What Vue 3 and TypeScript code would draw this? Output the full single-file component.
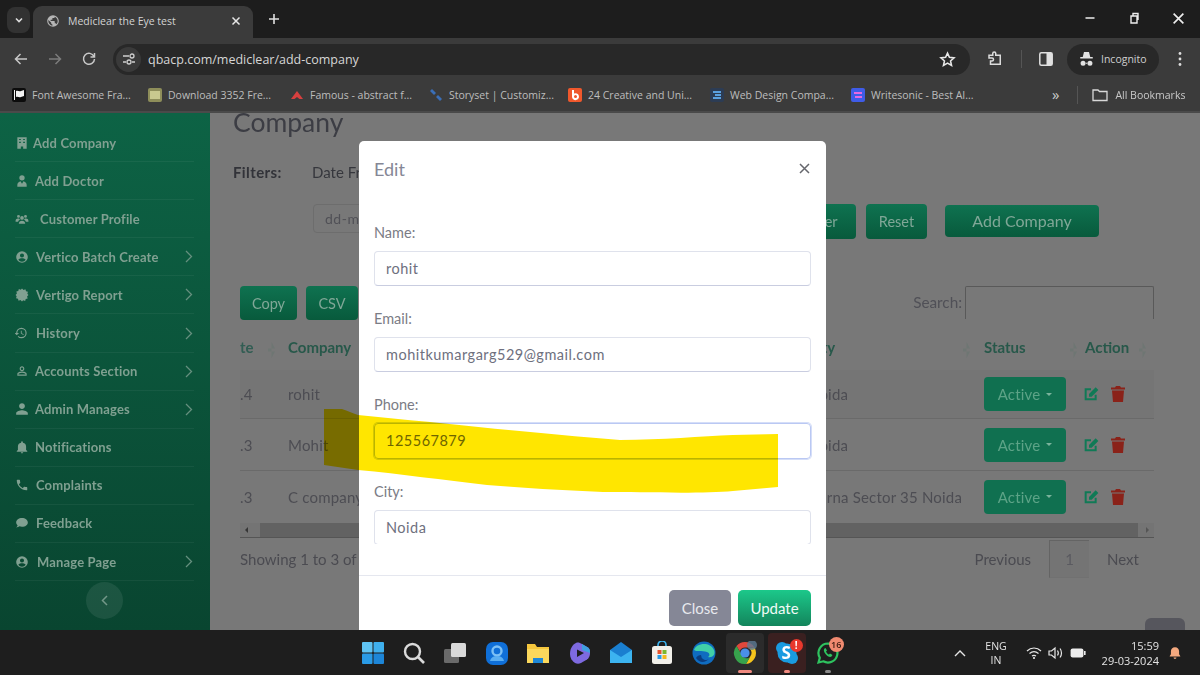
<script setup lang="ts">
interface NavItem {
  label: string
  icon: string
  gap: number
  more?: boolean
}

const ICONS: Record<string, string> = {
  building: 'M4 2h16v20h-6v-4h-4v4H4zM7 5v2h3V5zm7 0v2h3V5zM7 10v2h3v-2zm7 0v2h3v-2z',
  doctor: 'M12 2a4.6 4.6 0 0 1 4.6 4.6A4.6 4.6 0 0 1 12 11.2a4.6 4.6 0 0 1-4.6-4.6A4.6 4.6 0 0 1 12 2zM4 22v-3.500c0-3 3-5.500 5.500-6l2.500 4 2.500-4c2.500.5 5.500 3 5.500 6V22z',
  users: 'M6 5a2.500 2.500 0 1 1 0 5 2.500 2.500 0 0 1 0-5zm12 0a2.500 2.500 0 1 1 0 5 2.500 2.500 0 0 1 0-5zM12 7a3.200 3.200 0 1 1 0 6.400A3.200 3.200 0 0 1 12 7zM1 15c0-2.500 2-4 4-4h2c.6 1 1 1.600 1.800 2.300C7 14 5.800 15 5.400 16.500H1zm22 0c0-2.500-2-4-4-4h-2c-.6 1-1 1.600-1.800 2.300 1.800.7 3 1.700 3.400 3.200H23zM6.500 20c0-3 2.500-5 5.500-5s5.500 2 5.500 5z',
  circleUser: 'M12 2a10 10 0 1 0 0 20 10 10 0 0 0 0-20zm0 4a3.500 3.500 0 1 1 0 7 3.500 3.500 0 0 1 0-7zm0 14c-2.600 0-4.900-1.300-6.300-3.300C7 15 10 14.200 12 14.200s5 .8 6.300 2.500C16.900 18.700 14.600 20 12 20z',
  burst: 'M12 1l2.600 2.300 3.300-1 1 3.300 3.300 1-1 3.300L23 12l-2.300 2.600 1 3.300-3.300 1-1 3.300-3.300-1L12 23l-2.600-2.300-3.300 1-1-3.300-3.300-1 1-3.300L1 12l2.300-2.600-1-3.300 3.300-1 1-3.300 3.300 1z',
  history: 'M11 3a9 9 0 0 1 0 18 8.950 8.950 0 0 1-6.360-2.640l1.420-1.420A6.970 6.970 0 0 0 11 19a7 7 0 1 0-7-7h3l-4 4-4-4h3a9 9 0 0 1 9-9zm-1 5h1.500v4.250l3.500 2.080-.72 1.210L10 13z',
  userLine: 'M12 5.900a2.100 2.100 0 1 1 0 4.200 2.100 2.100 0 0 1 0-4.200m0 9c2.970 0 6.100 1.460 6.100 2.100v1.100H5.900V17c0-.64 3.130-2.100 6.100-2.100M12 4C9.790 4 8 5.790 8 8s1.790 4 4 4 4-1.790 4-4-1.790-4-4-4zm0 9c-2.670 0-8 1.340-8 4v3h16v-3c0-2.660-5.330-4-8-4z',
  user: 'M12 12c2.760 0 5-2.240 5-5s-2.240-5-5-5-5 2.240-5 5 2.240 5 5 5zm0 2c-3.340 0-10 1.670-10 5v3h20v-3c0-3.330-6.660-5-10-5z',
  bell: 'M12 23c1.100 0 2-.9 2-2h-4c0 1.100.9 2 2 2zm7-6v-6c0-3.070-1.630-5.640-5.500-6.320V3.500c0-.83-.67-1.500-1.500-1.500s-1.500.67-1.500 1.500v1.180C6.630 5.360 5 7.920 5 11v6l-2 2v1h18v-1z',
  phone: 'M6.620 10.790c1.440 2.830 3.760 5.140 6.590 6.590l2.200-2.200c.27-.27.67-.36 1.020-.24 1.120.37 2.330.57 3.570.57.55 0 1 .45 1 1V20c0 .55-.45 1-1 1-9.390 0-17-7.610-17-17 0-.55.45-1 1-1h3.500c.55 0 1 .45 1 1 0 1.250.2 2.450.57 3.570.11.35.03.74-.25 1.020z',
  comment: 'M12 3.500C6.500 3.500 2 6.800 2 11c0 1.900 1 3.600 2.500 4.900-.3 1.400-1.200 2.800-2.500 3.600 2.200 0 4-.8 5.400-1.900 1.400.5 3 .9 4.600.9 5.500 0 10-3.300 10-7.500s-4.500-7.500-10-7.500z',
}

const navItems: NavItem[] = [
  { label: 'Add Company', icon: 'building', gap: 18 },
  { label: 'Add Doctor', icon: 'doctor', gap: 20 },
  { label: 'Customer Profile', icon: 'users', gap: 25 },
  { label: 'Vertico Batch Create', icon: 'circleUser', gap: 21, more: true },
  { label: 'Vertigo Report', icon: 'burst', gap: 21, more: true },
  { label: 'History', icon: 'history', gap: 21, more: true },
  { label: 'Accounts Section', icon: 'userLine', gap: 20, more: true },
  { label: 'Admin Manages', icon: 'user', gap: 20, more: true },
  { label: 'Notifications', icon: 'bell', gap: 20 },
  { label: 'Complaints', icon: 'phone', gap: 21 },
  { label: 'Feedback', icon: 'comment', gap: 21 },
  { label: 'Manage Page', icon: 'circleUser', gap: 22, more: true },
]

const bookmarks = [
  { label: 'Font Awesome Fra...', back: '#0c0c0c', fill: '#f2f2f2', d: 'M2 2h1v10H2zM4 3c2-1 3 1 5 0l3-1v6l-3 1c-2 1-3-1-5 0z', width: 136 },
  { label: 'Download 3352 Fre...', back: '#8e8e5a', fill: '#c9c98f', d: 'M2 3h10v8H2z', width: 142 },
  { label: 'Famous - abstract f...', back: 'transparent', fill: '#d8403f', d: 'M7 3l6 8H9.500L7 9l-2.500 2H1z', width: 139 },
  { label: 'Storyset | Customiz...', back: 'transparent', fill: '#3a6fb8', d: 'M3 1l4 4-2 2-4-4zM9 7l4 4-2 2-4-4z', width: 139 },
  { label: '24 Creative and Uni...', back: '#f0582c', fill: '#fff', d: 'M4 2h2v3.500a3.500 3.500 0 1 1-2 3.200zM7.500 7a1.500 1.500 0 1 0 0 3 1.500 1.500 0 0 0 0-3z', width: 142 },
  { label: 'Web Design Compa...', back: '#2c3c54', fill: '#5aa0e0', d: 'M3 3h8v2H3zM5 6h6v2H5zM3 9h8v2H3z', width: 141 },
  { label: 'Writesonic - Best AI...', back: '#3f5ce8', fill: '#e66ae0', d: 'M3 4h8v2H3zM4 8h7v2H4z', width: 134 },
]

const rows = [
  { date: '.4', company: 'rohit', city: 'Noida' },
  { date: '.3', company: 'Mohit', city: 'Noida' },
  { date: '.3', company: 'C company', city: 'Corna Sector 35 Noida' },
]

const fields = [
  { label: 'Name:', value: 'rohit' },
  { label: 'Email:', value: 'mohitkumargarg529@gmail.com' },
  { label: 'Phone:', value: '125567879', focus: true },
  { label: 'City:', value: 'Noida' },
]
</script>

<template>
  <div class="screen">
    <!-- browser chrome -->
    <div class="tabbar">
      <button class="tab-search">
        <svg width="10" height="10" viewBox="0 0 10 10"><path d="M2 3.500l3 3 3-3" fill="none" stroke="#ddd" stroke-width="1.600" /></svg>
      </button>
      <div class="tab">
        <svg width="14" height="14" viewBox="0 0 24 24"><path fill="#b5b5b5" d="M12 2a10 10 0 1 0 0 20 10 10 0 0 0 0-20zM4 12c0-.6.1-1.200.2-1.800L9 15v1c0 1.100.9 2 2 2v2c-3.900-.5-7-3.900-7-8zm13.900 5.400c-.3-.8-1-1.400-1.900-1.400h-1v-3c0-.6-.4-1-1-1H8v-2h2c.6 0 1-.4 1-1V7h2c1.100 0 2-.9 2-2v-.4c2.900 1.200 5 4.100 5 7.400 0 2.100-.8 4-2.100 5.400z" /></svg>
        <span class="tab-title">Mediclear the Eye test</span>
        <svg class="tab-close" width="10" height="10" viewBox="0 0 10 10"><path d="M1.500 1.500l7 7m0-7l-7 7" stroke="#e6e6e6" stroke-width="1.500" /></svg>
      </div>
      <svg class="tab-plus" width="12" height="12" viewBox="0 0 12 12"><path d="M6 1v10M1 6h10" stroke="#e0e0e0" stroke-width="1.600" /></svg>
      <div class="win-controls">
        <svg width="12" height="12" viewBox="0 0 12 12"><path d="M1.500 6h9" stroke="#eee" stroke-width="1.500" /></svg>
        <svg width="12" height="12" viewBox="0 0 12 12"><path d="M3 4h6v7H3zM5 4V1.500h5V8" fill="none" stroke="#eee" stroke-width="1.400" /></svg>
        <svg width="13" height="13" viewBox="0 0 12 12"><path d="M1.500 1.500l9 9m0-9l-9 9" stroke="#eee" stroke-width="1.500" /></svg>
      </div>
    </div>

    <div class="toolbar">
      <div class="nav-btns">
        <svg width="16" height="16" viewBox="0 0 16 16"><path d="M14 8H3m4.500-5L2.500 8l5 5" fill="none" stroke="#c8c8c8" stroke-width="1.500" /></svg>
        <svg width="16" height="16" viewBox="0 0 16 16"><path d="M2 8h11M8.500 3l5 5-5 5" fill="none" stroke="#7c7c7c" stroke-width="1.500" /></svg>
        <svg width="16" height="16" viewBox="0 0 16 16"><path d="M13 5.500A5.500 5.500 0 1 0 13.500 8M13.500 2v4h-4" fill="none" stroke="#c8c8c8" stroke-width="1.500" /></svg>
      </div>
      <div class="address">
        <span class="tune">
          <svg width="14" height="14" viewBox="0 0 14 14"><path d="M1 4h6M1 10h3M10 10h3" stroke="#cfcfcf" stroke-width="1.400" fill="none" /><circle cx="10" cy="4" r="2" fill="none" stroke="#cfcfcf" stroke-width="1.300" /><circle cx="7" cy="10" r="2" fill="none" stroke="#cfcfcf" stroke-width="1.300" /></svg>
        </span>
        <span class="url">qbacp.com/mediclear/add-company</span>
        <svg class="star" width="17" height="17" viewBox="0 0 24 24"><path d="M12 3l2.700 6 6.500.7-4.900 4.300 1.400 6.500L12 17.200 6.300 20.500l1.400-6.500-4.900-4.300L9.300 9z" fill="none" stroke="#e8e8e8" stroke-width="2.200" /></svg>
      </div>
      <svg class="ext" width="18" height="18" viewBox="0 0 24 24"><path d="M4 7h5V4.500a2 2 0 0 1 4 0V7h6v12H6v-4.500h2a2 2 0 0 0 0-4H4z" fill="none" stroke="#dcdcdc" stroke-width="2" /></svg>
      <span class="tool-sep"></span>
      <svg class="panel" width="14" height="14" viewBox="0 0 14 14"><rect x=".8" y=".8" width="12.400" height="12.400" rx="1.500" fill="none" stroke="#e0e0e0" stroke-width="1.500" /><rect x="7.500" y="1" width="5.500" height="12" fill="#e0e0e0" /></svg>
      <div class="incognito">
        <svg width="15" height="17" viewBox="0 0 24 26"><path fill="#e2e2e2" d="M8 1h8l2 8h4v2.500H2V9h4zM6.500 15a4 4 0 1 1 0 8 4 4 0 0 1 0-8zm11 0a4 4 0 1 1 0 8 4 4 0 0 1 0-8zm-6.500 3h2v1.800h-2z" /></svg>
        <span>Incognito</span>
      </div>
      <svg class="kebab" width="4" height="16" viewBox="0 0 4 16"><circle cx="2" cy="2.500" r="1.400" fill="#ddd" /><circle cx="2" cy="8" r="1.400" fill="#ddd" /><circle cx="2" cy="13.500" r="1.400" fill="#ddd" /></svg>
    </div>

    <div class="bookmarks">
      <div v-for="b in bookmarks" :key="b.label" class="bookmark" :style="{ width: b.width + 'px' }">
        <svg width="14" height="14" viewBox="0 0 14 14"><rect width="14" height="14" rx="2" :fill="b.back" /><path :d="b.d" :fill="b.fill" /></svg>
        <span>{{ b.label }}</span>
      </div>
      <span class="bm-more">»</span>
      <span class="tool-sep short"></span>
      <svg width="16" height="14" viewBox="0 0 16 14"><path d="M1 2h5l1.500 1.500H15V12.500H1z" fill="none" stroke="#d8d8d8" stroke-width="1.300" /></svg>
      <span class="bm-all">All Bookmarks</span>
    </div>

    <!-- dimmed page -->
    <div class="page">
      <aside class="sidebar">
        <div v-for="item in navItems" :key="item.label" class="nav-item">
          <span class="nav-icon" :style="{ width: item.gap + 'px' }">
            <svg width="14" height="14" viewBox="0 0 24 24"><path :d="ICONS[item.icon]" fill="#80a091" fill-rule="evenodd" /></svg>
          </span>
          <span class="nav-label">{{ item.label }}</span>
          <svg v-if="item.more" width="8" height="13" viewBox="0 0 8 13"><path d="M1 1l5.500 5.500L1 12" fill="none" stroke="#658f7e" stroke-width="1.300" /></svg>
        </div>
        <div class="collapse">
          <svg width="7" height="11" viewBox="0 0 7 11"><path d="M6 1L1.500 5.500 6 10" fill="none" stroke="#739788" stroke-width="1.500" /></svg>
        </div>
      </aside>

      <main class="content">
        <h1 class="title">Company</h1>
        <div class="filter-labels">
          <strong>Filters:</strong>
          <span>Date From</span>
        </div>
        <div class="filter-row">
          <div class="date-input">dd-mm-yyyy</div>
          <div class="btn filter-btn">Filter</div>
          <div class="btn reset-btn">Reset</div>
          <div class="btn add-btn">Add Company</div>
        </div>

        <div class="dt-top">
          <div class="btn dt-btn copy">Copy</div>
          <div class="btn dt-btn csv">CSV</div>
          <label class="search-label">Search:</label>
          <div class="search-box"></div>
        </div>

        <div class="table">
          <div class="tr head">
            <div class="th">te<i class="sort"></i></div>
            <div class="th">Company</div>
            <div class="th">City<i class="sort last"></i></div>
            <div class="th">Status<i class="sort"></i></div>
            <div class="th">Action<i class="sort"></i></div>
          </div>
          <div v-for="(r, i) in rows" :key="i" class="tr body" :class="{ shade: i === 0 }">
            <div>{{ r.date }}</div>
            <div>{{ r.company }}</div>
            <div>{{ r.city }}</div>
            <div><span class="status">Active<i class="caret"></i></span></div>
            <div class="actions">
              <svg width="16" height="16" viewBox="0 0 24 24"><path d="M19 13v7H4V5h8" fill="none" stroke="#107a56" stroke-width="3" /><path d="M9 12L19 2l4 4-10 10H9z" fill="#107a56" /></svg>
              <svg width="14" height="16" viewBox="0 0 14 16"><path d="M5 0h4l1 1.500h4v2H0v-2h4zM1 4.500h12L12 16H2z" fill="#8a2219" /></svg>
            </div>
          </div>
        </div>

        <div class="scrollbar">
          <i class="arrow-l"></i>
          <div class="thumb"></div>
          <i class="arrow-r"></i>
        </div>

        <div class="dt-bottom">
          <span class="showing">Showing 1 to 3 of 3 entries</span>
          <span class="page-link">Previous</span>
          <span class="page-num">1</span>
          <span class="page-link next">Next</span>
        </div>
      </main>

      <div class="to-top"></div>

      <section class="modal">
        <header class="modal-head">
          <span>Edit</span>
          <svg width="11" height="11" viewBox="0 0 11 11"><path d="M1 1l9 9m0-9l-9 9" stroke="#66676d" stroke-width="1.500" /></svg>
        </header>
        <div class="modal-body">
          <div v-for="f in fields" :key="f.label" class="field">
            <label>{{ f.label }}</label>
            <div class="input" :class="{ focus: f.focus }">{{ f.value }}</div>
          </div>
        </div>
        <footer class="modal-foot">
          <div class="btn close">Close</div>
          <div class="btn update">Update</div>
        </footer>
      </section>

      <!-- marker scribble on top of the screenshot -->
      <svg class="scribble" width="480" height="110" viewBox="0 0 480 110">
        <path d="M2 3L20 3C26 5 30 7 36 9C130 18 220 28 298 34C340 34 380 30 411 29L456 28V81L411 85C380 88 320 86 281 86C240 84 200 82 165 79C120 74 80 68 36 64L2 59Z" fill="#ffe600" />
      </svg>
    </div>

    <!-- windows taskbar -->
    <footer class="taskbar">
      <div class="task-icons">
        <span class="task">
          <svg width="24" height="24" viewBox="0 0 24 24"><rect x="1" y="1" width="10.500" height="10.500" rx="1" fill="#5fc4f4" /><rect x="12.500" y="1" width="10.500" height="10.500" rx="1" fill="#3fb0ee" /><rect x="1" y="12.500" width="10.500" height="10.500" rx="1" fill="#2a9be6" /><rect x="12.500" y="12.500" width="10.500" height="10.500" rx="1" fill="#1d86d8" /></svg>
        </span>
        <span class="task">
          <svg width="24" height="24" viewBox="0 0 24 24"><circle cx="10.500" cy="10.500" r="7.500" fill="none" stroke="#dadada" stroke-width="2.400" /><path d="M16 16l6 6" stroke="#dadada" stroke-width="2.600" /></svg>
        </span>
        <span class="task">
          <svg width="24" height="24" viewBox="0 0 24 24"><rect x="1" y="8" width="15" height="14" rx="1.500" fill="#6a6a6a" /><rect x="8" y="2" width="15" height="14" rx="1.500" fill="#d9d9d9" /></svg>
        </span>
        <span class="task">
          <svg width="24" height="24" viewBox="0 0 24 24"><rect x="1" y="1" width="22" height="23" rx="7" fill="#0f6fd8" /><circle cx="12" cy="10" r="4.500" fill="none" stroke="#7cc0f5" stroke-width="2.400" /><path d="M5 20c1-4 4-5 7-5s6 1 7 5z" fill="#5aaef2" /></svg>
        </span>
        <span class="task">
          <svg width="24" height="24" viewBox="0 0 24 24"><path d="M1 3h8l2 3h12v16H1z" fill="#f5c63d" /><path d="M1 8h22v14H1z" fill="#fbd85c" /><path d="M7 17h10v5H7z" fill="#1e88d8" /></svg>
        </span>
        <span class="task">
          <svg width="24" height="24" viewBox="0 0 24 24"><path d="M8 2c2-1 4 0 6 1l6 3.500c2 1.500 2 3.500 2 5.500 0 3-1 5-3 6.500l-6 3.500c-2 1-4 1-6 0-3-2-5-5-5-9 0-5 2-9 6-11z" fill="#7e6ae0" /><path d="M14 3l6 3.500c2 1.500 2 3.500 2 5.500l-8-3z" fill="#3f9fe0" /><path d="M9 8.500l7 3.500-7 4z" fill="#1e1e1e" /></svg>
        </span>
        <span class="task">
          <svg width="24" height="24" viewBox="0 0 24 24"><path d="M1 9L12 1l11 8v13H1z" fill="#1a7fd0" /><path d="M1 9l11 7 11-7v13H1z" fill="#3cb4f0" /></svg>
        </span>
        <span class="task">
          <svg width="24" height="24" viewBox="0 0 24 24"><path d="M8 6V4a4 4 0 0 1 8 0v2" fill="none" stroke="#3cb4f0" stroke-width="1.600" /><rect x="2" y="5" width="20" height="18" rx="2.500" fill="#f2f0ea" /><rect x="7.500" y="9" width="4" height="4" fill="#e8542c" /><rect x="12.500" y="9" width="4" height="4" fill="#7cb82e" /><rect x="7.500" y="14" width="4" height="4" fill="#2a9be6" /><rect x="12.500" y="14" width="4" height="4" fill="#f5b81c" /></svg>
        </span>
        <span class="task">
          <svg width="24" height="24" viewBox="0 0 24 24"><circle cx="12" cy="12" r="11.500" fill="#0f6cc0" /><path d="M2 9C4 2 18 0 22 9c2 5-2 8-6 7 2-1 2-4-1-5-5-2-11 0-13-2z" fill="#41d0a8" /><path d="M9 14a5 5 0 0 0 8 4c-3 3-9 5-13-1 1-2 3-3 5-3z" fill="#0a3d80" /></svg>
        </span>
        <span class="task active">
          <svg width="24" height="24" viewBox="0 0 24 24"><path d="M12 1a11 11 0 0 1 9.500 5.500H12a5.500 5.500 0 0 0-5.200 3.700L3.500 5A11 11 0 0 1 12 1z" fill="#e0483c" /><path d="M21.500 6.500A11 11 0 0 1 13 23l4.500-8a5.500 5.500 0 0 0-1-7.500z" fill="#f5c51c" /><path d="M3.500 5A11 11 0 0 0 13 23l3.800-6.500a5.500 5.500 0 0 1-8-2.500z" fill="#37a24c" /><circle cx="12" cy="12" r="4.600" fill="#4a8fe8" /><circle cx="19" cy="4" r="5" fill="#5c7b94" fill-opacity=".8" /></svg>
          <i class="running wide"></i>
        </span>
        <span class="task active red">
          <svg width="24" height="24" viewBox="0 0 24 24"><circle cx="7" cy="7" r="6" fill="#1a9be0" /><circle cx="17" cy="17" r="6" fill="#1a9be0" /><circle cx="12" cy="12" r="9.500" fill="#1a9be0" /></svg>
          <b class="letter">S</b>
          <b class="badge">!</b>
          <i class="running"></i>
        </span>
        <span class="task">
          <svg width="24" height="24" viewBox="0 0 24 24"><path d="M12 2.500a9.500 9.500 0 0 0-8.200 14.300L2.500 21.500l4.800-1.200A9.500 9.500 0 1 0 12 2.500z" fill="none" stroke="#2ec35f" stroke-width="2.200" /><path d="M8.500 7.500c-1 1-1 3 1 5.500s4.500 3.500 6 2.500l1-1.500-2.500-1.500-1 1c-1 0-2.500-1.500-3-3l1-1L9.500 7z" fill="#2ec35f" /></svg>
          <b class="badge wa">16</b>
          <i class="running dim"></i>
        </span>
      </div>
      <div class="tray">
        <svg width="12" height="8" viewBox="0 0 12 8"><path d="M1 7l5-5 5 5" fill="none" stroke="#e6e6e6" stroke-width="1.400" /></svg>
        <div class="lang">ENG<br />IN</div>
        <svg class="wifi" width="16" height="14" viewBox="0 0 16 14"><path d="M1 5c4-4 10-4 14 0M3.500 7.500c3-2.500 6-2.500 9 0M6 10c1.500-1 2.500-1 4 0" fill="none" stroke="#e8e8e8" stroke-width="1.200" /><circle cx="8" cy="12" r="1.100" fill="#e8e8e8" /></svg>
        <svg width="16" height="14" viewBox="0 0 16 14"><path d="M1 5h2.500L7 2v10L3.500 9H1z" fill="none" stroke="#e8e8e8" stroke-width="1.200" /><path d="M9.500 4.500c1 1.500 1 3.500 0 5M12 2.500c2 2.500 2 6.500 0 9" fill="none" stroke="#e8e8e8" stroke-width="1.200" /></svg>
        <svg class="batt" width="16" height="10" viewBox="0 0 16 10"><rect x=".6" y=".6" width="12.800" height="8.800" rx="2" fill="#ededed" /><rect x="14" y="3" width="1.600" height="4" fill="#ededed" /></svg>
        <div class="clock">15:59<br />29-03-2024</div>
        <svg width="14" height="15" viewBox="0 0 24 24"><path d="M12 23c1.400 0 2.500-1.100 2.500-2.500h-5c0 1.400 1.100 2.500 2.500 2.500zm9-5l-2-3V10c0-3.800-2.500-7-7-7s-7 3.200-7 7v5l-2 3v1h18z" fill="#f5a97f" /></svg>
      </div>
    </footer>
  </div>
</template>

<style>
html, body { margin: 0; background: #787878; }
</style>

<style scoped>
.screen {
  width: 1200px;
  height: 675px;
  display: flex;
  flex-direction: column;
  overflow: hidden;
  font-family: Lato, "Open Sans", sans-serif;
  color: #4f4f55;
  filter: blur(0.35px);
}
.tabbar {
  height: 38px;
  flex: none;
  display: flex;
  align-items: flex-end;
  background: #1d1d1d;
  padding-left: 7px;
  box-sizing: border-box;
  font-family: "Open Sans", sans-serif;
}
.tab-search {
  width: 23px;
  height: 26px;
  margin-bottom: 5px;
  padding: 0;
  border: 0;
  border-radius: 8px;
  background: #323232;
  display: flex;
  align-items: center;
  justify-content: center;
}
.tab {
  margin-left: 3px;
  width: 220px;
  height: 32px;
  background: #3b3b3b;
  border-radius: 9px 9px 0 0;
  display: flex;
  align-items: center;
  padding: 0 12px 2px 13px;
  box-sizing: border-box;
  font-size: 10.5px;
  color: #d3d3d3;
}
.tab-title { margin-left: 8px; flex: 1; white-space: nowrap; }
.tab-plus { margin: 0 0 13px 15px; }
.win-controls {
  margin-left: auto;
  margin-bottom: 13px;
  margin-right: 15px;
  display: flex;
  gap: 32px;
}
.toolbar {
  height: 42px;
  flex: none;
  background: #3b3b3b;
  display: flex;
  align-items: center;
  font-family: "Open Sans", sans-serif;
}
.nav-btns { display: flex; gap: 18px; margin-left: 13px; width: 100px; }
.address {
  width: 857px;
  height: 31px;
  border-radius: 16px;
  background: #282828;
  display: flex;
  align-items: center;
  box-sizing: border-box;
  padding: 0 14px 0 3px;
}
.tune {
  width: 25px;
  height: 25px;
  border-radius: 50%;
  background: #3a3a3a;
  display: flex;
  align-items: center;
  justify-content: center;
}
.url { margin-left: 7px; font-size: 12.5px; color: #d6d6d6; flex: 1; }
.ext { margin-left: 16px; }
.tool-sep { width: 1px; height: 18px; background: #555; margin-left: 17px; }
.tool-sep.short { margin: 0 14px 0 18px; }
.panel { margin-left: 17px; }
.incognito {
  margin-left: 14px;
  width: 92px;
  height: 31px;
  border-radius: 16px;
  background: #282828;
  display: flex;
  align-items: center;
  gap: 7px;
  padding-left: 12px;
  box-sizing: border-box;
  font-size: 10.5px;
  color: #cfcfcf;
}
.kebab { margin-left: 19px; }
.bookmarks {
  height: 33px;
  flex: none;
  background: #3b3b3b;
  border-bottom: 2px solid #4a4a4a;
  box-sizing: border-box;
  display: flex;
  align-items: center;
  padding: 0 0 2px 12px;
  font-family: "Open Sans", sans-serif;
  font-size: 10.5px;
  color: #bdbdbd;
}
.bookmark {
  flex: none;
  display: flex;
  align-items: center;
  gap: 6px;
  white-space: nowrap;
  overflow: hidden;
}
.bm-more { margin-left: 67px; font-size: 15px; color: #ccc; line-height: 1; }
.bm-all { margin-left: 7px; color: #c8c8c8; white-space: nowrap; }

.page {
  position: relative;
  flex: 1;
  min-height: 0;
  display: flex;
  overflow: hidden;
  background: #787878;
}
.sidebar {
  width: 210px;
  flex: none;
  box-sizing: border-box;
  padding: 11px 16px 0 15px;
  background: linear-gradient(#0d6345, #094530);
}
.nav-item {
  height: 38.1px;
  display: flex;
  align-items: center;
  box-sizing: border-box;
  border-bottom: 1px solid rgba(255, 255, 255, 0.05);
  font-size: 13px;
  letter-spacing: 0.15px;
  font-weight: 700;
  color: #80a091;
  padding-right: 1px;
}
.nav-icon { flex: none; display: flex; }
.nav-label { flex: 1; white-space: nowrap; }
.collapse {
  width: 37px;
  height: 37px;
  margin: 1px auto 0;
  border-radius: 50%;
  background: rgba(255, 255, 255, 0.08);
  display: flex;
  align-items: center;
  justify-content: center;
}
.content {
  flex: 1;
  min-width: 0;
  box-sizing: border-box;
  padding: 0 46px 0 30px;
}
.title {
  margin: -6px 0 0 -7px;
  height: 30px;
  line-height: 30px;
  font-size: 26.5px;
  font-weight: 400;
  color: #3c3d44;
}
.filter-labels {
  margin: 26px 0 0 -7px;
  height: 18px;
  line-height: 18px;
  font-size: 15px;
  display: flex;
  color: #36373d;
}
.filter-labels strong { width: 79px; font-weight: 700; color: #323339; letter-spacing: 0.4px; }
.filter-row {
  margin-top: 23px;
  display: flex;
  align-items: flex-start;
}
.date-input {
  margin-left: 73px;
  width: 200px;
  height: 29px;
  line-height: 27px;
  padding-left: 11px;
  box-sizing: border-box;
  border: 1px solid #6d6d6d;
  border-radius: 4px;
  font-size: 14px;
  color: #505056;
  letter-spacing: 0.5px;
}
.btn {
  display: flex;
  align-items: center;
  justify-content: center;
  border-radius: 4px;
  font-size: 14.5px;
  color: #80a797;
  background: linear-gradient(#0f7250, #085a3c);
  box-sizing: border-box;
}
.filter-btn { margin-left: 273px; width: 70px; height: 35px; }
.reset-btn { margin-left: 10px; width: 61px; height: 35px; }
.add-btn { margin: 1px 0 0 18px; width: 154px; height: 32px; font-size: 16px; padding-bottom: 2px; }
.dt-top {
  margin-top: 47px;
  display: flex;
  align-items: flex-start;
}
.dt-btn { height: 34px; }
.copy { width: 57px; }
.csv { width: 52px; margin-left: 9px; }
.search-label {
  margin-left: auto;
  line-height: 33px;
  font-size: 15.3px;
  color: #505057;
}
.search-box {
  margin-left: 3px;
  width: 189px;
  height: 33px;
  box-sizing: border-box;
  border: 1px solid #595959;
  border-bottom: 0;
  border-radius: 2px 2px 0 0;
}
.table { margin-top: 13px; }
.tr {
  display: grid;
  grid-template-columns: 48px 520px 176px 101px 69px;
  align-items: center;
}
.head { height: 28px; font-size: 15px; font-weight: 700; color: #27584a; }
.th { position: relative; }
.th:first-child { color: #315d53; }
.sort {
  position: absolute;
  top: 4px;
  right: 8px;
  width: 7px;
  height: 16px;
  background: #6e7673;
  clip-path: polygon(50% 0, 100% 40%, 0 40%, 0 60%, 100% 60%, 50% 100%);
}
.sort.last { right: 14px; }
.th:first-child .sort { right: 13px; }
.body {
  height: 51px;
  border-top: 1px solid #6a6a6a;
  font-size: 15px;
  letter-spacing: 0.2px;
  color: #4d4d53;
  white-space: nowrap;
}
.body:nth-child(2) { border-top: 0; margin-top: 9px; height: 48px; }
.shade { background: #757575; }
.status {
  width: 82px;
  height: 34px;
  border-radius: 4px;
  background: #107050;
  color: #5da387;
  font-size: 15px;
  display: flex;
  align-items: center;
  justify-content: center;
  gap: 6px;
}
.caret {
  width: 0;
  height: 0;
  border: 3.500px solid transparent;
  border-top-color: #7bb39c;
  border-bottom: 0;
}
.actions { display: flex; align-items: center; gap: 12px; margin-left: -2px; }
.scrollbar {
  margin-top: 1px;
  height: 15px;
  box-sizing: border-box;
  border-bottom: 1px solid #555;
  display: flex;
  align-items: center;
  background: #747474;
}
.thumb { flex: 1; height: 14px; margin-left: 12px; background: #626262; }
.arrow-l, .arrow-r {
  width: 0;
  height: 0;
  margin-left: 5px;
  border: 3px solid transparent;
  border-right-color: #363636;
  border-left: 0;
}
.arrow-r {
  margin: 0 5px 0 8px;
  border-right: 0;
  border-left: 3px solid #555;
}
.dt-bottom {
  margin-top: 1px;
  height: 39px;
  display: flex;
  align-items: center;
  font-size: 15px;
  color: #4b4b51;
}
.showing { flex: 1; white-space: nowrap; }
.page-num {
  margin: 0 18px;
  width: 40px;
  height: 38px;
  box-sizing: border-box;
  border: 1px solid #646464;
  border-right: 0;
  border-bottom-color: #717171;
  background: #747474;
  display: flex;
  align-items: center;
  justify-content: center;
  color: #5a5a60;
}
.next { width: 47px; }
.to-top {
  position: absolute;
  right: 15px;
  bottom: 0;
  width: 40px;
  height: 12px;
  border-radius: 6px 6px 0 0;
  background: #56565d;
}
.modal {
  position: absolute;
  left: 359px;
  top: 28px;
  width: 467px;
  height: 520px;
  background: #fff;
  border-radius: 5px;
  display: flex;
  flex-direction: column;
}
.modal-head {
  height: 56px;
  flex: none;
  padding: 0 15px;
  display: flex;
  align-items: center;
  justify-content: space-between;
  font-size: 18px;
  color: #858796;
}
.modal-head svg { margin-right: 1px; margin-top: -2px; }
.modal-body {
  height: 347px;
  flex: none;
  overflow: hidden;
  padding: 25px 15px 0;
  box-sizing: border-box;
}
.field { margin-bottom: 22px; }
.field label {
  display: block;
  height: 22px;
  line-height: 22px;
  font-size: 14.500px;
  color: #7b7c85;
}
.input {
  margin-top: 7px;
  height: 35px;
  line-height: 33px;
  box-sizing: border-box;
  padding-left: 11px;
  border: 1px solid #dfe2ec;
  border-bottom-color: #c9cde0;
  border-radius: 4px;
  font-size: 14.5px;
  letter-spacing: 0.5px;
  color: #6e707e;
}
.input.focus {
  height: 36px;
  line-height: 33px;
  border: 1.500px solid #bac8f3;
  box-shadow: 0 0 0 1px #d5def8;
}
.modal-foot {
  margin-top: 31px;
  border-top: 1px solid #e5e7ef;
  padding: 14px 15px 0;
  display: flex;
  justify-content: flex-end;
  gap: 7px;
}
.close, .update {
  height: 36px;
  font-size: 15px;
  color: #e8e9ee;
  border-radius: 5px;
}
.close { width: 62px; background: #858796; }
.update { width: 73px; color: #f0faf6; background: linear-gradient(#1cc88a, #13855c); }
.scribble {
  position: absolute;
  left: 322px;
  top: 293px;
  mix-blend-mode: multiply;
  pointer-events: none;
}

.taskbar {
  height: 45px;
  flex: none;
  background: #1e1e1e;
  display: flex;
  align-items: center;
  font-family: "Open Sans", sans-serif;
  color: #e4e4e4;
}
.task-icons {
  margin-left: 352px;
  display: flex;
  align-items: center;
}
.task {
  position: relative;
  width: 41.400px;
  height: 40px;
  box-sizing: border-box;
  display: flex;
  align-items: center;
  justify-content: center;
  border-radius: 4px;
}
.task.active { background: #2b2b2b; width: 38px; margin: 0 1.700px; }
.task.red { background: #3a2020; }
.running {
  position: absolute;
  bottom: 0;
  left: 50%;
  width: 6px;
  height: 2.500px;
  margin-left: -3px;
  border-radius: 2px;
  background: #f08a80;
}
.running.wide { width: 14px; margin-left: -7px; }
.running.dim { background: #8a8a8a; }
.letter {
  position: absolute;
  left: 14px;
  top: 9px;
  font-size: 17px;
  color: #fff;
  line-height: 22px;
}
.badge {
  position: absolute;
  top: 6px;
  right: 3px;
  width: 13px;
  height: 13px;
  border-radius: 50%;
  background: #e8382c;
  color: #fff;
  font-size: 10px;
  line-height: 13px;
  text-align: center;
}
.badge.wa {
  top: 4px;
  right: 5px;
  width: 15px;
  height: 15px;
  line-height: 15px;
  background: #f08a70;
  color: #3a1a10;
  font-size: 9px;
  font-weight: 600;
}
.tray {
  margin-left: auto;
  margin-right: 18px;
  display: flex;
  align-items: center;
}
.lang {
  margin-left: 13px;
  width: 34px;
  font-size: 10.500px;
  line-height: 14px;
  text-align: center;
}
.wifi { margin-left: 13px; margin-right: 6px; }
.batt { margin-left: 6px; }
.clock {
  margin-left: 5px;
  margin-right: 9px;
  width: 68px;
  font-size: 11px;
  line-height: 15px;
  text-align: right;
  white-space: nowrap;
}
</style>
